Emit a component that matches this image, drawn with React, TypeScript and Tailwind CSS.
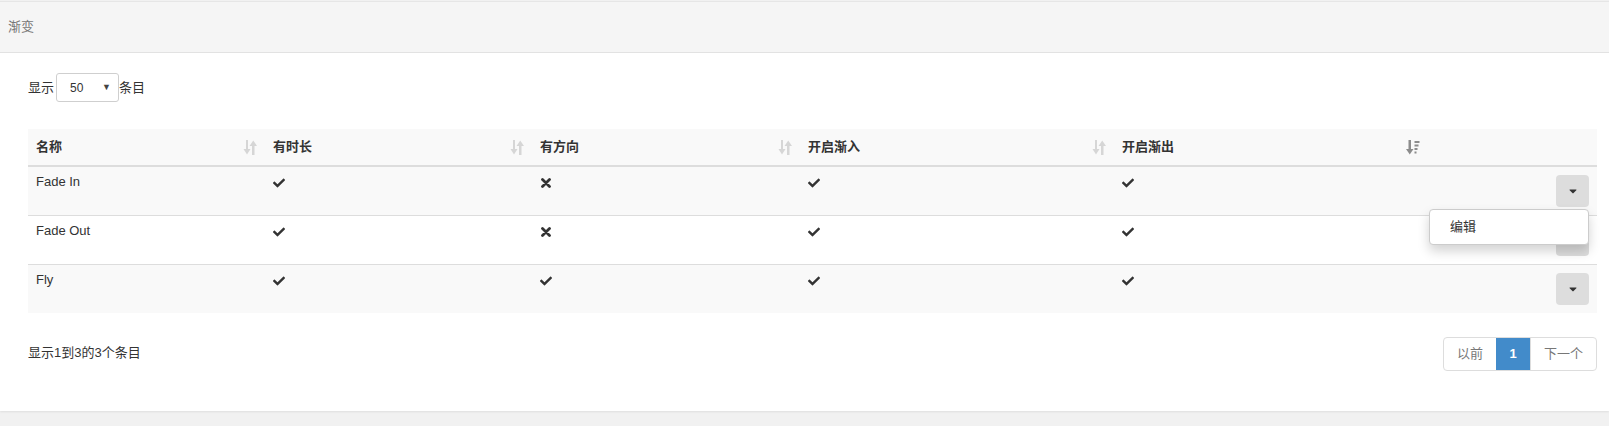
import { FaCheck, FaCaretDown } from "react-icons/fa";

const font = { fontFamily: '"Liberation Sans", "Noto Sans CJK SC", Arial, sans-serif' };

const rows = [
  { name: "Fade In", d: true, dir: false, i: true, o: true },
  { name: "Fade Out", d: true, dir: false, i: true, o: true },
  { name: "Fly", d: true, dir: true, i: true, o: true },
];

function SortIcon() {
  return (
    <svg width="14" height="15" viewBox="0 0 14 15" className="shrink-0">
      <g fill="#d6d6d6">
        <rect x="3" y="0" width="2" height="10" />
        <polygon points="0.5,9 7.5,9 4,14.5" />
        <rect x="9" y="5" width="2.5" height="10" />
        <polygon points="6.5,6 14,6 10.25,0.5" />
      </g>
    </svg>
  );
}

function SortDescIcon() {
  return (
    <svg width="14" height="15" viewBox="0 0 14 15" className="shrink-0">
      <g fill="#8c8c8c">
        <rect x="2.5" y="0" width="2.5" height="10" />
        <polygon points="0,9 7.5,9 3.75,14.5" />
        <rect x="8.5" y="1" width="5" height="2" />
        <rect x="8.5" y="4.5" width="4" height="2" />
        <rect x="8.5" y="8" width="3" height="2" />
        <rect x="8.5" y="11.5" width="2" height="2" />
      </g>
    </svg>
  );
}

function Mark({ ok }: { ok: boolean }) {
  return ok ? (
    <FaCheck className="mt-[2px] text-[#333]" size={12} />
  ) : (
    <svg width="10" height="10" viewBox="0 0 10 10" className="mt-[3px] ml-[1px]">
      <path d="M1.5 1.5 L8.5 8.5 M8.5 1.5 L1.5 8.5" stroke="#333" strokeWidth="2.8" strokeLinecap="round" />
    </svg>
  );
}

function CaretButton() {
  return (
    <button className="ml-auto flex h-[32px] w-[33px] items-center justify-center rounded-[4px] bg-[#dddddd]">
      <FaCaretDown className="text-[#333]" size={12} />
    </button>
  );
}

export default function App() {
  const heads = ["名称", "有时长", "有方向", "开启渐入", "开启渐出"];
  const widths = ["w-[237px]", "w-[267px]", "w-[268px]", "w-[314px]", "w-[316px]"];

  return (
    <div className="flex h-[426px] w-full flex-col bg-[#f1f1f1] text-[13px] text-[#333]" style={font}>
      <div className="border-t border-[#e6e6e6] mt-px">
        <div className="flex h-[51px] items-center border-b border-[#e3e3e3] bg-[#f5f5f5] px-2 text-[#777]">
          渐变
        </div>
        <div className="bg-white pl-[28px] pr-[12px] pt-[20px] pb-[40px] shadow-[0_1px_2px_rgba(0,0,0,0.08)]">
          {/* 每页条目 */}
          <div className="flex items-center">
            <span>显示</span>
            <div className="ml-[2px] flex h-[29px] w-[63px] items-center justify-between rounded-[3px] border border-[#cfcfcf] pl-[13px] pr-[7px] text-[12px]">
              <span>50</span>
              <span className="text-[9px] text-[#444]">▼</span>
            </div>
            <span>条目</span>
          </div>

          {/* 表格 */}
          <table className="mt-[27px] w-full border-collapse">
            <thead>
              <tr className="bg-[#f9f9f9]">
                {heads.map((h, i) => (
                  <th key={h} className={`${widths[i]} border-b-2 border-[#dddddd] p-2 text-left font-bold leading-[20px]`}>
                    <div className="flex items-center justify-between">
                      <span>{h}</span>
                      {i < 4 ? <SortIcon /> : <span className="mr-[2px]"><SortDescIcon /></span>}
                    </div>
                  </th>
                ))}
                <th className="border-b-2 border-[#dddddd] p-2" />
              </tr>
            </thead>
            <tbody>
              {rows.map((r, idx) => (
                <tr key={r.name} className={idx % 2 === 0 ? "bg-[#f9f9f9]" : "bg-white"}>
                  <td className="border-t border-[#dddddd] px-2 pt-[6px] align-top leading-[18px]">{r.name}</td>
                  <td className="border-t border-[#dddddd] px-2 pt-[8px] align-top"><Mark ok={r.d} /></td>
                  <td className="border-t border-[#dddddd] px-2 pt-[8px] align-top"><Mark ok={r.dir} /></td>
                  <td className="border-t border-[#dddddd] px-2 pt-[8px] align-top"><Mark ok={r.i} /></td>
                  <td className="border-t border-[#dddddd] px-2 pt-[8px] align-top"><Mark ok={r.o} /></td>
                  <td className="relative border-t border-[#dddddd] p-2">
                    <CaretButton />
                    {idx === 0 && (
                      <div className="absolute right-[8px] top-[42px] z-10 w-[160px] rounded-[4px] border border-[#cccccc] bg-white py-[5px] shadow-[0_6px_12px_rgba(0,0,0,0.175)]">
                        <div className="px-[20px] py-[3px] leading-[18px] text-[#333]">编辑</div>
                      </div>
                    )}
                  </td>
                </tr>
              ))}
            </tbody>
          </table>

          {/* 分页 */}
          <div className="mt-[24px] flex items-center justify-between">
            <span className="-mt-[3px]">显示1到3的3个条目</span>
            <div className="flex h-[34px] overflow-hidden rounded-[4px] border border-[#dddddd]">
              <span className="flex w-[52px] items-center justify-center text-[#777]">以前</span>
              <span className="flex w-[34px] items-center justify-center bg-[#428bca] font-bold text-white">1</span>
              <span className="flex w-[66px] items-center justify-center border-l border-[#dddddd] text-[#777]">下一个</span>
            </div>
          </div>
        </div>
      </div>
    </div>
  );
}
